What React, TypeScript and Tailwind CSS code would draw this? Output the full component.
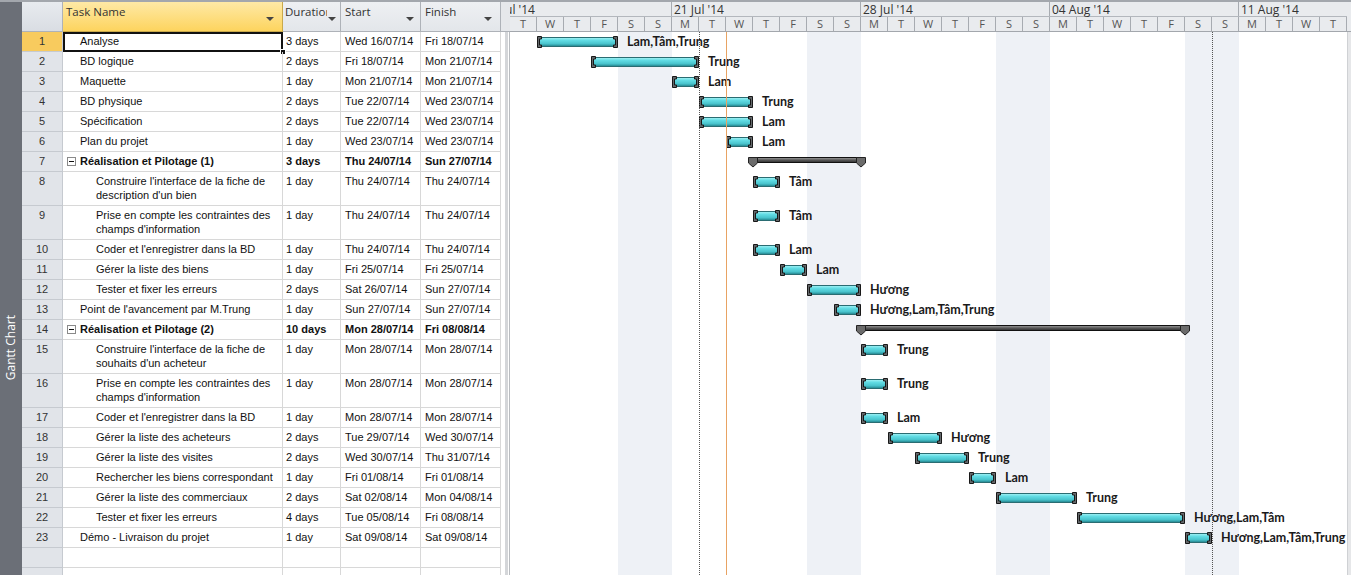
import React from 'react';

type Task = {
  n: number;
  name: string;
  lvl: 1 | 2;
  sum?: boolean;
  dur: string;
  start: string;
  finish: string;
  s: number;
  e: number;
  label?: string;
  tall?: boolean;
};

const tasks: Task[] = [
  { n: 1, name: 'Analyse', lvl: 1, dur: '3 days', start: 'Wed 16/07/14', finish: 'Fri 18/07/14', s: 1, e: 4, label: 'Lam,Tâm,Trung' },
  { n: 2, name: 'BD logique', lvl: 1, dur: '2 days', start: 'Fri 18/07/14', finish: 'Mon 21/07/14', s: 3, e: 7, label: 'Trung' },
  { n: 3, name: 'Maquette', lvl: 1, dur: '1 day', start: 'Mon 21/07/14', finish: 'Mon 21/07/14', s: 6, e: 7, label: 'Lam' },
  { n: 4, name: 'BD physique', lvl: 1, dur: '2 days', start: 'Tue 22/07/14', finish: 'Wed 23/07/14', s: 7, e: 9, label: 'Trung' },
  { n: 5, name: 'Spécification', lvl: 1, dur: '2 days', start: 'Tue 22/07/14', finish: 'Wed 23/07/14', s: 7, e: 9, label: 'Lam' },
  { n: 6, name: 'Plan du projet', lvl: 1, dur: '1 day', start: 'Wed 23/07/14', finish: 'Wed 23/07/14', s: 8, e: 9, label: 'Lam' },
  { n: 7, name: 'Réalisation et Pilotage (1)', lvl: 1, sum: true, dur: '3 days', start: 'Thu 24/07/14', finish: 'Sun 27/07/14', s: 9, e: 13 },
  { n: 8, name: "Construire l'interface de la fiche de description d'un bien", lvl: 2, dur: '1 day', start: 'Thu 24/07/14', finish: 'Thu 24/07/14', s: 9, e: 10, label: 'Tâm', tall: true },
  { n: 9, name: "Prise en compte les contraintes des champs d'information", lvl: 2, dur: '1 day', start: 'Thu 24/07/14', finish: 'Thu 24/07/14', s: 9, e: 10, label: 'Tâm', tall: true },
  { n: 10, name: "Coder et l'enregistrer dans la BD", lvl: 2, dur: '1 day', start: 'Thu 24/07/14', finish: 'Thu 24/07/14', s: 9, e: 10, label: 'Lam' },
  { n: 11, name: 'Gérer la liste des biens', lvl: 2, dur: '1 day', start: 'Fri 25/07/14', finish: 'Fri 25/07/14', s: 10, e: 11, label: 'Lam' },
  { n: 12, name: 'Tester et fixer les erreurs', lvl: 2, dur: '2 days', start: 'Sat 26/07/14', finish: 'Sun 27/07/14', s: 11, e: 13, label: 'Hương' },
  { n: 13, name: "Point de l'avancement par M.Trung", lvl: 1, dur: '1 day', start: 'Sun 27/07/14', finish: 'Sun 27/07/14', s: 12, e: 13, label: 'Hương,Lam,Tâm,Trung' },
  { n: 14, name: 'Réalisation et Pilotage (2)', lvl: 1, sum: true, dur: '10 days', start: 'Mon 28/07/14', finish: 'Fri 08/08/14', s: 13, e: 25 },
  { n: 15, name: "Construire l'interface de la fiche de souhaits d'un acheteur", lvl: 2, dur: '1 day', start: 'Mon 28/07/14', finish: 'Mon 28/07/14', s: 13, e: 14, label: 'Trung', tall: true },
  { n: 16, name: "Prise en compte les contraintes des champs d'information", lvl: 2, dur: '1 day', start: 'Mon 28/07/14', finish: 'Mon 28/07/14', s: 13, e: 14, label: 'Trung', tall: true },
  { n: 17, name: "Coder et l'enregistrer dans la BD", lvl: 2, dur: '1 day', start: 'Mon 28/07/14', finish: 'Mon 28/07/14', s: 13, e: 14, label: 'Lam' },
  { n: 18, name: 'Gérer la liste des acheteurs', lvl: 2, dur: '2 days', start: 'Tue 29/07/14', finish: 'Wed 30/07/14', s: 14, e: 16, label: 'Hương' },
  { n: 19, name: 'Gérer la liste des visites', lvl: 2, dur: '2 days', start: 'Wed 30/07/14', finish: 'Thu 31/07/14', s: 15, e: 17, label: 'Trung' },
  { n: 20, name: 'Rechercher les biens correspondant', lvl: 2, dur: '1 day', start: 'Fri 01/08/14', finish: 'Fri 01/08/14', s: 17, e: 18, label: 'Lam' },
  { n: 21, name: 'Gérer la liste des commerciaux', lvl: 2, dur: '2 days', start: 'Sat 02/08/14', finish: 'Mon 04/08/14', s: 18, e: 21, label: 'Trung' },
  { n: 22, name: 'Tester et fixer les erreurs', lvl: 2, dur: '4 days', start: 'Tue 05/08/14', finish: 'Fri 08/08/14', s: 21, e: 25, label: 'Hương,Lam,Tâm' },
  { n: 23, name: 'Démo - Livraison du projet', lvl: 1, dur: '1 day', start: 'Sat 09/08/14', finish: 'Sat 09/08/14', s: 25, e: 26, label: 'Hương,Lam,Tâm,Trung' },
];

const DAY = 27;
const LETTERS = ['M', 'T', 'W', 'T', 'F', 'S', 'S'];
const DAYS = Array.from({ length: 31 }, (_, i) => (i + 1) % 7);
const WEEKS = ["14 Jul '14", "21 Jul '14", "28 Jul '14", "04 Aug '14", "11 Aug '14"];

function TaskBar({ w }: { w: number }) {
  return (
    <svg width={w} height={12} className="block shrink-0">
      <defs>
        <linearGradient id="cyanGrad" x1="0" y1="0" x2="0" y2="1">
          <stop offset="0" stopColor="#a8f3f6" />
          <stop offset="0.3" stopColor="#63dde5" />
          <stop offset="0.7" stopColor="#48c3cc" />
          <stop offset="1" stopColor="#1f7d86" />
        </linearGradient>
      </defs>
      <rect x={2} y={1.5} width={w - 4} height={9} fill="url(#cyanGrad)" stroke="#2a6c72" strokeWidth={1} />
      <path d="M0.5 0.5 H4.5 V3 H2.5 V9 H4.5 V11.5 H0.5 Z" fill="#64686b" stroke="#181818" strokeWidth={1} />
      <path
        d={`M${w - 0.5} 0.5 H${w - 4.5} V3 H${w - 2.5} V9 H${w - 4.5} V11.5 H${w - 0.5} Z`}
        fill="#64686b"
        stroke="#181818"
        strokeWidth={1}
      />
    </svg>
  );
}

function SummaryBar({ w }: { w: number }) {
  const W = w + 10;
  return (
    <svg width={W} height={11} className="block shrink-0">
      <defs>
        <linearGradient id="sumGrad" x1="0" y1="0" x2="0" y2="1">
          <stop offset="0" stopColor="#a0a0a0" />
          <stop offset="0.5" stopColor="#5a5a5a" />
          <stop offset="1" stopColor="#2e2e2e" />
        </linearGradient>
      </defs>
      <rect x={5} y={0.5} width={w} height={5} fill="url(#sumGrad)" stroke="#111" strokeWidth={1} />
      <path d="M0.5 0.5 H9.5 V6 L5 10 L0.5 6 Z" fill="#6b6b6b" stroke="#222" strokeWidth={1} />
      <path
        d={`M${w + 0.5} 0.5 H${w + 9.5} V6 L${w + 5} 10 L${w + 0.5} 6 Z`}
        fill="#6b6b6b"
        stroke="#222"
        strokeWidth={1}
      />
    </svg>
  );
}

function Arrow() {
  return <div className="w-0 h-0 border-l-[4px] border-r-[4px] border-t-[4px] border-l-transparent border-r-transparent border-t-[#444]" />;
}

function TableRow({ t }: { t: Task }) {
  const h = t.tall ? 'h-[34px]' : 'h-[20px]';
  const sel = t.n === 1;
  return (
    <div className={`flex ${h} text-[11px] leading-[14px] text-[#111]`}>
      <div
        className={`w-[41px] shrink-0 border-r border-b border-[#c6cad0] text-center pt-[2px] text-[#333] ${
          sel ? 'bg-[#f8cb5e]' : 'bg-[#e1e4e9]'
        }`}
      >
        {t.n}
      </div>
      <div
        className={`relative w-[220px] shrink-0 border-r border-b border-[#d8d8d8] pt-[2px] flex items-start ${
          t.sum ? 'pl-[4px]' : t.lvl === 1 ? 'pl-[17px]' : 'pl-[33px] pr-[4px]'
        } ${t.sum ? 'font-bold' : ''}`}
      >
        {t.sum && (
          <div className="mt-[3px] mr-[4px] w-[9px] h-[9px] border border-[#8a8a8a] bg-white flex items-center justify-center shrink-0">
            <div className="w-[5px] h-px bg-[#111]" />
          </div>
        )}
        <span>{t.name}</span>
        {sel && (
          <>
            <div className="absolute left-0 top-0 right-[-1px] bottom-[-1px] border-2 border-[#111]" />
            <div className="absolute right-[-4px] bottom-[-4px] w-[6px] h-[6px] bg-[#111] border border-white" />
          </>
        )}
      </div>
      <div className={`w-[58px] shrink-0 border-r border-b border-[#d8d8d8] pl-[3px] pt-[2px] whitespace-nowrap ${t.sum ? 'font-bold' : ''}`}>
        {t.dur}
      </div>
      <div className={`w-[80px] shrink-0 border-r border-b border-[#d8d8d8] pl-[4px] pt-[2px] whitespace-nowrap ${t.sum ? 'font-bold' : ''}`}>
        {t.start}
      </div>
      <div className={`w-[80px] shrink-0 border-r border-b border-[#d8d8d8] pl-[4px] pt-[2px] whitespace-nowrap ${t.sum ? 'font-bold' : ''}`}>
        {t.finish}
      </div>
    </div>
  );
}

function EmptyRow() {
  return (
    <div className="flex h-[20px]">
      <div className="w-[41px] shrink-0 border-r border-b border-[#c6cad0] bg-[#e1e4e9]" />
      <div className="w-[220px] shrink-0 border-r border-b border-[#d8d8d8]" />
      <div className="w-[58px] shrink-0 border-r border-b border-[#d8d8d8]" />
      <div className="w-[80px] shrink-0 border-r border-b border-[#d8d8d8]" />
      <div className="w-[80px] shrink-0 border-r border-b border-[#d8d8d8]" />
    </div>
  );
}

function ChartRow({ t }: { t: Task }) {
  const h = t.tall ? 'h-[34px]' : 'h-[20px]';
  if (t.sum) {
    return (
      <div className={`${h}`}>
        <div className="h-[20px] flex items-start pt-[5px]" style={{ paddingLeft: t.s * DAY - 5 }}>
          <SummaryBar w={(t.e - t.s) * DAY} />
        </div>
      </div>
    );
  }
  return (
    <div className={`${h}`}>
      <div className="h-[20px] flex items-center" style={{ paddingLeft: t.s * DAY }}>
        <TaskBar w={(t.e - t.s) * DAY} />
        <span className="ml-[9px] whitespace-nowrap font-['Lato','Open_Sans',sans-serif] font-bold text-[12.5px] leading-[16px] text-[#1a1a1a]">
          {t.label}
        </span>
      </div>
    </div>
  );
}

export default function App() {
  return (
    <div className="w-[1351px] h-[575px] overflow-hidden bg-white flex flex-col font-['Liberation_Sans',Arial,sans-serif]">
      <div className="h-[2px] shrink-0 bg-[#a3a7ad]" />
      <div className="flex flex-1 min-h-0">
        {/* view bar */}
        <div className="w-[22px] shrink-0 bg-[#6b6f77] flex flex-col items-center pt-[313px]">
          <div className="[writing-mode:vertical-rl] rotate-180 text-white text-[12px] leading-[14px] font-['Open_Sans',sans-serif] whitespace-nowrap">
            Gantt Chart
          </div>
        </div>

        {/* table */}
        <div className="w-[479px] shrink-0 flex flex-col">
          <div className="flex h-[30px] shrink-0 font-['Open_Sans',sans-serif] text-[11.5px] leading-[16px] text-[#333]">
            <div className="w-[41px] shrink-0 bg-[linear-gradient(#e8ebef,#d9dde3)] border-r border-b border-[#aeb2b8]" />
            <div className="w-[220px] shrink-0 bg-[linear-gradient(#fee9a6,#fdd45e)] border-r border-b border-[#c9a94b] flex justify-between pl-[3px] pr-[8px] pt-[2px]">
              <span>Task Name</span>
              <div className="mt-[13px]">
                <Arrow />
              </div>
            </div>
            <div className="w-[58px] shrink-0 bg-[linear-gradient(#eef0f3,#e3e6ea)] border-r border-b border-[#aeb2b8] flex pl-[2px] pt-[2px]">
              <span className="w-[42px] overflow-hidden whitespace-nowrap">Duration</span>
              <div className="mt-[13px] ml-[1px]">
                <Arrow />
              </div>
            </div>
            <div className="w-[80px] shrink-0 bg-[linear-gradient(#eef0f3,#e3e6ea)] border-r border-b border-[#aeb2b8] flex justify-between pl-[4px] pr-[6px] pt-[2px]">
              <span>Start</span>
              <div className="mt-[13px]">
                <Arrow />
              </div>
            </div>
            <div className="w-[80px] shrink-0 bg-[linear-gradient(#eef0f3,#e3e6ea)] border-r border-b border-[#aeb2b8] flex justify-between pl-[4px] pr-[8px] pt-[2px]">
              <span>Finish</span>
              <div className="mt-[13px]">
                <Arrow />
              </div>
            </div>
          </div>
          <div className="flex flex-col">
            {tasks.map((t) => (
              <TableRow key={t.n} t={t} />
            ))}
            <EmptyRow />
            <EmptyRow />
          </div>
        </div>

        {/* splitter */}
        <div className="w-[9px] shrink-0 flex flex-col">
          <div className="h-[30px] bg-[#e6e8eb] border-b border-[#aeb2b8]" />
          <div className="flex-1 flex">
            <div className="w-[4px] bg-white" />
            <div className="w-[3px] bg-[#d4d6d9]" />
            <div className="w-[2px] bg-white border-r border-[#b9bcc0]" />
          </div>
        </div>

        {/* chart */}
        <div className="w-[837px] shrink-0 flex flex-col">
          <div className="h-[30px] shrink-0 bg-[#e9ebee] border-b border-[#a3a7ad] flex flex-col font-['Open_Sans',sans-serif] overflow-hidden">
            <div className="h-[15px] shrink-0 flex border-b border-[#b3b7bd] -ml-[27px]">
              {WEEKS.map((w) => (
                <div key={w} className="w-[189px] shrink-0 border-r border-[#a7abb1] pl-[2px] text-[12px] leading-[15px] text-[#333] whitespace-nowrap">
                  {w}
                </div>
              ))}
            </div>
            <div className="flex-1 flex">
              {DAYS.map((d, i) => (
                <div key={i} className="w-[27px] shrink-0 border-r border-[#a7abb1] text-center text-[11px] leading-[14px] text-[#555]">
                  {LETTERS[d]}
                </div>
              ))}
            </div>
          </div>
          <div className="relative flex-1 overflow-hidden">
            <div className="absolute inset-0 flex">
              {DAYS.map((d, i) => (
                <div key={i} className={`w-[27px] shrink-0 h-full ${d >= 5 ? 'bg-[#eef1f6]' : ''}`} />
              ))}
            </div>
            <div className="relative">
              {tasks.map((t) => (
                <ChartRow key={t.n} t={t} />
              ))}
            </div>
            <div className="absolute top-0 bottom-0 left-[189px] border-l border-dotted border-[#555] pointer-events-none" />
            <div className="absolute top-0 bottom-0 left-[702px] border-l border-dotted border-[#555] pointer-events-none" />
            <div className="absolute top-0 bottom-0 left-[216px] w-px bg-[#e8a363] pointer-events-none" />
          </div>
        </div>

        {/* scrollbar edge */}
        <div className="w-[4px] shrink-0 flex flex-col">
          <div className="h-[30px] bg-[#e9ebee] border-b border-[#a3a7ad]" />
          <div className="flex-1 bg-[#e6e7e9] border-l border-[#cfd1d4]" />
        </div>
      </div>
    </div>
  );
}
